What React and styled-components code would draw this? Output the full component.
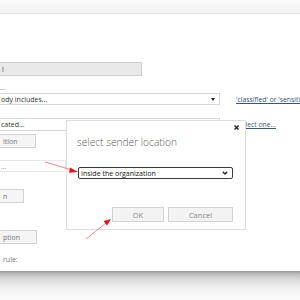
import React from "react";
import styled, { createGlobalStyle } from "styled-components";

const GlobalStyle = createGlobalStyle`
  html, body { margin: 0; padding: 0; background: #fff; }
  body { width: 300px; height: 300px; overflow: hidden; font-family: "Open Sans", "Noto Sans", sans-serif; }
`;

const Page = styled.div`
  width: 300px;
  height: 300px;
  display: flex;
  flex-direction: column;
  position: relative;
  overflow: hidden;
`;

const TopBar = styled.div`
  flex: none;
  height: 13px;
  background: linear-gradient(#fdfdfd, #f1f1f1);
  border-bottom: 1px solid #e3e3e3;
`;

const Main = styled.main`
  flex: none;
  height: 257px;
  position: relative;
  background: #fff;
  overflow: hidden;
`;

const BottomShade = styled.div`
  flex: 1;
  background: linear-gradient(#9b9b9b 0px, #bdbdbd 3px, #dedede 9px, #eeeeee 16px, #f7f7f7 24px, #fbfbfb 29px);
`;

const Form = styled.div`
  display: flex;
  flex-direction: column;
  align-items: flex-start;
  margin-left: -10px;
  padding-top: 48px;
  font-size: 7px;
  color: #333;
`;

const Row = styled.div`
  display: flex;
  align-items: center;
  margin-top: ${(p) => p.$mt || 0}px;
`;

const ReadOnlyInput = styled.div`
  box-sizing: border-box;
  width: 152px;
  height: 14px;
  padding-left: 11px;
  display: flex;
  align-items: center;
  background: #e9e9e9;
  border: 1px solid #cfcfcf;
  color: #444;
`;

const Label = styled.div`
  height: 10px;
  line-height: 10px;
  padding-left: ${(p) => p.$pad || 10}px;
  margin-top: ${(p) => p.$mt || 0}px;
  color: #777;
`;

const SelectBox = styled.div`
  box-sizing: border-box;
  width: ${(p) => p.$w}px;
  height: ${(p) => p.$h}px;
  padding: 0 4px 0 10px;
  display: flex;
  align-items: center;
  justify-content: space-between;
  border: 1px solid ${(p) => p.$border || "#d6d6d6"};
  background: #fff;
  color: ${(p) => p.$color || "#333"};
`;

const Caret = styled.span`
  width: 0;
  height: 0;
  border-left: 2px solid transparent;
  border-right: 2px solid transparent;
  border-top: 3px solid #222;
`;

const LinkText = styled.a`
  margin-left: ${(p) => p.$ml}px;
  white-space: nowrap;
  color: #34557e;
  text-decoration: underline;
  font-size: 6.8px;
`;

const Button = styled.button`
  box-sizing: border-box;
  width: ${(p) => p.$w}px;
  height: ${(p) => p.$h || 14}px;
  margin-top: ${(p) => p.$mt || 0}px;
  padding: 0 0 0 12px;
  text-align: left;
  font-family: inherit;
  font-size: 7px;
  color: #777;
  background: #f5f5f5;
  border: 1px solid #d3d3d3;
`;

const Dialog = styled.div`
  position: absolute;
  left: 66px;
  top: 106px;
  width: 180px;
  height: 110px;
  box-sizing: border-box;
  padding: 14px 12px 7px 10px;
  display: flex;
  flex-direction: column;
  background: #fff;
  border: 1px solid #dedede;
`;

const Close = styled.button`
  position: absolute;
  top: 3px;
  right: 5px;
  width: 7px;
  height: 7px;
  padding: 0;
  border: none;
  background: none;
  display: flex;
`;

const Title = styled.h2`
  margin: 0;
  font-size: 10.2px;
  line-height: 14px;
  font-weight: 300;
  color: #5a5a5a;
`;

const DialogSelect = styled.div`
  box-sizing: border-box;
  margin-top: 18px;
  margin-left: 1px;
  height: 12px;
  padding: 0 4px 0 2px;
  display: flex;
  align-items: center;
  justify-content: space-between;
  border: 1.5px solid #3a3a3a;
  border-radius: 2px;
  font-size: 7px;
  color: #111;
`;

const Actions = styled.div`
  margin-top: auto;
  display: flex;
  justify-content: flex-end;
  gap: 4px;
`;

const DialogButton = styled.button`
  box-sizing: border-box;
  width: ${(p) => p.$w}px;
  height: 15px;
  padding: 0;
  font-family: inherit;
  font-size: 7.5px;
  color: #888;
  background: #f3f3f3;
  border: 1px solid #d2d2d2;
`;

const Annotations = styled.svg`
  position: absolute;
  left: 0;
  top: 0;
  width: 300px;
  height: 300px;
  pointer-events: none;
`;

export default function App() {
  return (
    <>
      <GlobalStyle />
      <Page>
        <TopBar />
        <Main>
          <Form>
            <ReadOnlyInput>l</ReadOnlyInput>
            <Label $mt={7}>...</Label>
            <Row>
              <SelectBox $w={230} $h={12}>
                <span>ody includes...</span>
                <Caret />
              </SelectBox>
              <LinkText $ml={16}>'classified' or 'sensiti</LinkText>
            </Row>
            <Row $mt={13}>
              <SelectBox $w={230} $h={13}>
                <span>cated...</span>
              </SelectBox>
              <LinkText $ml={18}>Select one...</LinkText>
            </Row>
            <Button $w={46} $mt={3}>ition</Button>
            <Row $mt={12}>
              <SelectBox $w={76} $h={12} $border="#e8e8e8" $color="#777">
                <span>...</span>
              </SelectBox>
            </Row>
            <Button $w={34} $mt={17}>n</Button>
            <Button $w={47} $mt={27}>ption</Button>
            <Label $mt={11} $pad={13}>rule:</Label>
          </Form>
          <Dialog>
            <Close aria-label="close">
              <svg width="7" height="7" viewBox="0 0 7 7">
                <path d="M1.5 1.5 L5.5 5.5 M5.5 1.5 L1.5 5.5" stroke="#333" strokeWidth="1.6" />
              </svg>
            </Close>
            <Title>select sender location</Title>
            <DialogSelect>
              <span>Inside the organization</span>
              <svg width="6" height="4" viewBox="0 0 6 4">
                <path d="M0.8 0.8 L3 3 L5.2 0.8" stroke="#222" strokeWidth="1.3" fill="none" />
              </svg>
            </DialogSelect>
            <Actions>
              <DialogButton $w={52}>OK</DialogButton>
              <DialogButton $w={65}>Cancel</DialogButton>
            </Actions>
          </Dialog>
        </Main>
        <BottomShade />
        <Annotations viewBox="0 0 300 300">
          <line x1="45" y1="162" x2="72" y2="170" stroke="#f07a7a" strokeWidth="0.9" />
          <polygon points="78,172 70,167.5 69,172.8" fill="#e8131b" />
          <line x1="86" y1="239" x2="106" y2="223" stroke="#f07a7a" strokeWidth="0.9" />
          <polygon points="111,219 103.5,221 107,225.5" fill="#e8131b" />
        </Annotations>
      </Page>
    </>
  );
}
